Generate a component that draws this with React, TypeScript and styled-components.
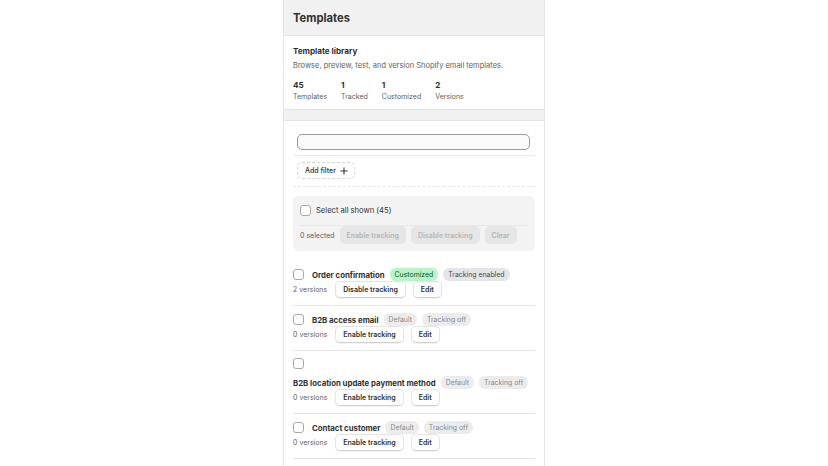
import React from "react";
import styled, { createGlobalStyle } from "styled-components";

type Template = {
  id: number;
  name: string;
  customized: boolean;
  tracking: boolean;
  versions: number;
};

const templates: Template[] = [
  { id: 1, name: "Order confirmation", customized: true, tracking: true, versions: 2 },
  { id: 2, name: "B2B access email", customized: false, tracking: false, versions: 0 },
  { id: 3, name: "B2B location update payment method", customized: false, tracking: false, versions: 0 },
  { id: 4, name: "Contact customer", customized: false, tracking: false, versions: 0 },
];

const stats = [
  { value: 45, label: "Templates" },
  { value: 1, label: "Tracked" },
  { value: 1, label: "Customized" },
  { value: 2, label: "Versions" },
];

const GlobalStyle = createGlobalStyle`
  html, body {
    margin: 0;
    padding: 0;
    background: #ffffff;
  }
  body {
    font-family: Inter, "Noto Sans", sans-serif;
    color: #303030;
    -webkit-font-smoothing: antialiased;
  }
`;

const App: React.FC = () => {
  return (
    <>
      <GlobalStyle />
      <Page>
        <Header>
          <PageTitle>Templates</PageTitle>
        </Header>

        <Card>
          <CardTitle>Template library</CardTitle>
          <Description>Browse, preview, test, and version Shopify email templates.</Description>
          <Stats>
            {stats.map((s) => (
              <Stat key={s.label}>
                <StatValue>{s.value}</StatValue>
                <Subdued>{s.label}</Subdued>
              </Stat>
            ))}
          </Stats>
        </Card>

        <ListCard>
          <SearchRow>
            <SearchInput aria-label="Search templates" />
          </SearchRow>
          <FilterRow>
            <FilterButton>
              Add filter
              <svg width="8" height="8" viewBox="0 0 10 10" fill="none">
                <path d="M5 1v8M1 5h8" stroke="#303030" strokeWidth="1.3" strokeLinecap="round" />
              </svg>
            </FilterButton>
          </FilterRow>

          <BulkBox>
            <BulkTop>
              <Checkbox />
              <BulkLabel>Select all shown (45)</BulkLabel>
            </BulkTop>
            <BulkActions>
              <Subdued>0 selected</Subdued>
              <DisabledButton>Enable tracking</DisabledButton>
              <DisabledButton>Disable tracking</DisabledButton>
              <DisabledButton>Clear</DisabledButton>
            </BulkActions>
          </BulkBox>

          <List>
            {templates.map((t) => (
              <Row key={t.id}>
                <RowHead>
                  <Checkbox />
                  <TitleGroup>
                    <RowTitle>{t.name}</RowTitle>
                    <Badge $tone={t.customized ? "success" : "plain"}>
                      {t.customized ? "Customized" : "Default"}
                    </Badge>
                    <Badge $tone={t.tracking ? "info" : "plain"}>
                      {t.tracking ? "Tracking enabled" : "Tracking off"}
                    </Badge>
                  </TitleGroup>
                </RowHead>
                <RowActions>
                  <Versions>{t.versions} versions</Versions>
                  <Button>{t.tracking ? "Disable tracking" : "Enable tracking"}</Button>
                  <Button>Edit</Button>
                </RowActions>
              </Row>
            ))}
          </List>
        </ListCard>
      </Page>
    </>
  );
};

const Page = styled.main`
  width: 260px;
  height: 100vh;
  overflow: hidden;
  margin: 0 auto;
  background: #f1f1f1;
  border-left: 1px solid #e6e6e6;
  border-right: 1px solid #e6e6e6;
  display: flex;
  flex-direction: column;
`;

const Header = styled.header`
  flex: none;
  height: 35px;
  padding: 0 9px;
  display: flex;
  align-items: center;
`;

const PageTitle = styled.h1`
  margin: 0;
  font-size: 11.2px;
  font-weight: 700;
  color: #303030;
`;

const Card = styled.section`
  flex: none;
  background: #ffffff;
  border-top: 1px solid #e3e3e3;
  border-bottom: 1px solid #e3e3e3;
  padding: 9px 9px 7px;
  display: flex;
  flex-direction: column;
`;

const CardTitle = styled.h2`
  margin: 0;
  font-size: 8.1px;
  font-weight: 650;
  line-height: 12px;
`;

const Description = styled.p`
  margin: 3px 0 0;
  font-size: 7.5px;
  line-height: 11px;
  color: #616161;
`;

const Subdued = styled.span`
  font-size: 7px;
  line-height: 11px;
  color: #616161;
  white-space: nowrap;
`;

const Stats = styled.div`
  display: flex;
  gap: 14px;
  margin-top: 9px;
`;

const Stat = styled.div`
  display: flex;
  flex-direction: column;
`;

const StatValue = styled.span`
  font-size: 8.2px;
  font-weight: 650;
  line-height: 11px;
`;

const ListCard = styled(Card)`
  flex: 1;
  margin-top: 10px;
  padding-top: 9px;
  border-bottom: none;
`;

const SearchRow = styled.div`
  padding: 4px 5px 5px 4px;
  border-bottom: 1px solid #ebebeb;
`;

const SearchInput = styled.input`
  display: block;
  box-sizing: border-box;
  width: 100%;
  height: 16px;
  border: 1px solid #9a9a9a;
  border-radius: 5px;
  background: #fafafa;
  outline: none;
`;

const FilterRow = styled.div`
  display: flex;
  padding: 6px 4px 7px;
  border-bottom: 1px dashed #e6e6e6;
`;

const FilterButton = styled.button`
  display: inline-flex;
  align-items: center;
  gap: 4px;
  height: 17px;
  padding: 0 6px 0 7px;
  border: 1px dashed #d4d4d4;
  border-radius: 5px;
  background: #ffffff;
  font-family: inherit;
  font-size: 7px;
  font-weight: 550;
  color: #303030;
`;

const BulkBox = styled.div`
  margin-top: 9px;
  background: #f3f3f3;
  border-radius: 6px;
  padding: 9px 7px 7px;
  display: flex;
  flex-direction: column;
`;

const BulkTop = styled.label`
  display: flex;
  align-items: center;
  gap: 5px;
  padding-bottom: 9px;
  border-bottom: 1px dotted #e0e0e0;
`;

const BulkLabel = styled.span`
  font-size: 7.6px;
  line-height: 11px;
  color: #303030;
`;

const BulkActions = styled.div`
  display: flex;
  align-items: center;
  gap: 5px;
`;

const DisabledButton = styled.button`
  height: 18px;
  padding: 0 7px;
  border: none;
  border-radius: 5px;
  background: #e6e6e6;
  color: #b5b5b5;
  font-family: inherit;
  font-size: 7px;
  font-weight: 600;
`;

const Checkbox = styled.span`
  flex: none;
  width: 11px;
  height: 11px;
  box-sizing: border-box;
  border: 1px solid #a8a8a8;
  border-radius: 3px;
  background: #ffffff;
`;

const List = styled.ul`
  list-style: none;
  margin: 10px 0 0;
  padding: 0;
`;

const Row = styled.li`
  padding: 7px 0 7px;
  border-bottom: 1px solid #e3e3e3;
  display: flex;
  flex-direction: column;
`;

const RowHead = styled.div`
  display: flex;
  flex-wrap: wrap;
  align-items: center;
  column-gap: 8px;
  row-gap: 7px;
`;

const TitleGroup = styled.div`
  display: flex;
  align-items: center;
  gap: 5px;
  white-space: nowrap;
`;

const RowTitle = styled.span`
  font-size: 7.8px;
  font-weight: 650;
  color: #303030;
`;

const badgeTones = {
  success: { bg: "#b4f6c6", fg: "#0c5132" },
  info: { bg: "#e4e5e8", fg: "#4a4a4a" },
  plain: { bg: "#ececec", fg: "#8a8a8a" },
};

const Badge = styled.span<{ $tone: keyof typeof badgeTones }>`
  height: 13px;
  padding: 0 5px;
  display: inline-flex;
  align-items: center;
  border-radius: 6px;
  font-size: 6.9px;
  background: ${(p) => badgeTones[p.$tone].bg};
  color: ${(p) => badgeTones[p.$tone].fg};
`;

const RowActions = styled.div`
  display: flex;
  align-items: center;
  gap: 7px;
`;

const Versions = styled(Subdued)`
  margin-right: 1px;
`;

const Button = styled.button`
  height: 17px;
  padding: 0 7px;
  border: 1px solid #e3e3e3;
  border-bottom-color: #d0d0d0;
  border-radius: 5px;
  background: #ffffff;
  box-shadow: 0 1px 0 rgba(0, 0, 0, 0.05);
  color: #303030;
  font-family: inherit;
  font-size: 7px;
  font-weight: 600;
`;

export default App;
